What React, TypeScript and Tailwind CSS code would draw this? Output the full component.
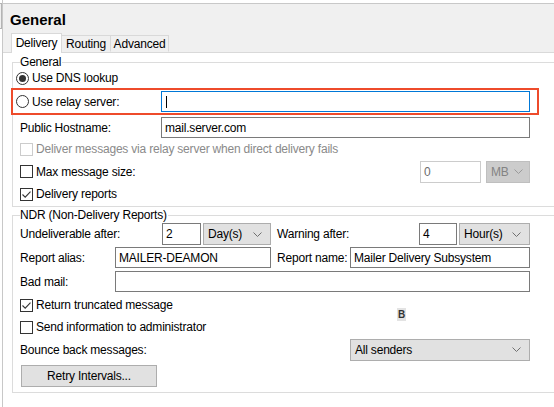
import type { ReactNode } from 'react';

function Radio({ checked }: { checked?: boolean }) {
    return (
        <span className="flex h-[13px] w-[13px] shrink-0 items-center justify-center rounded-full border border-[#333333] bg-white">
            {checked && <span className="h-[7px] w-[7px] rounded-full bg-[#333333]" />}
        </span>
    );
}

function Check({ checked, disabled }: { checked?: boolean; disabled?: boolean }) {
    return (
        <span
            className={
                'flex h-[13px] w-[13px] shrink-0 items-center justify-center border bg-white ' +
                (disabled ? 'border-[#cccccc]' : 'border-[#333333]')
            }
        >
            {checked && (
                <svg width="11" height="11" viewBox="0 0 11 11">
                    <path d="M1.5 5.5 L4.2 8.2 L9.5 2.6" fill="none" stroke="#333333" strokeWidth="1.1" />
                </svg>
            )}
        </span>
    );
}

function Chevron({ color = '#707070' }: { color?: string }) {
    return (
        <svg width="9" height="5" viewBox="0 0 9 5" className="shrink-0">
            <path d="M0.5 0.5 L4.5 4.5 L8.5 0.5" fill="none" stroke={color} strokeWidth="1" />
        </svg>
    );
}

function TextBox({ value, className = '' }: { value?: string; className?: string }) {
    return (
        <div className={'flex shrink-0 items-center border border-[#7a7a7a] bg-white pl-[3px] ' + className}>
            {value}
        </div>
    );
}

function Select({ value, className = '' }: { value: string; className?: string }) {
    return (
        <div
            className={
                'flex h-[22px] shrink-0 items-center justify-between border border-[#adadad] bg-[#e1e1e1] pl-[4px] pr-[8px] ' +
                className
            }
        >
            <span>{value}</span>
            <Chevron />
        </div>
    );
}

function Group({ label, children, className = '' }: { label: string; children: ReactNode; className?: string }) {
    return (
        <div className={'relative ml-[9px] w-[600px] border border-[#dcdcdc] ' + className}>
            <span className="absolute -top-[8px] left-[7px] bg-white pr-[1px] leading-[14px]">{label}</span>
            {children}
        </div>
    );
}

export default function App() {
    return (
        <div className="relative flex h-[407px] w-[554px] overflow-hidden bg-white font-['Liberation_Sans',Arial,sans-serif] text-[12px] tracking-[-0.2px] text-black">
            {/* left edge of neighbouring pane */}
            <div className="w-[2px] shrink-0">
                <div className="mt-[3px] h-[26px] border-y border-r border-[#b4b4b4] bg-[#f0f0f0]" />
            </div>

            <div className="flex flex-1 flex-col border-l border-[#c8c8c8] pt-[3px]">
                {/* Header */}
                <div className="flex h-[50px] flex-col border-y border-[#c8c8c8] border-b-[#d9d9d9] bg-[#f0f0f0]">
                    <div className="pl-[7px] pt-[7px] text-[15px] font-bold leading-[18px] tracking-normal">General</div>
                    <div className="relative z-10 mb-[-1px] mt-auto ml-[8px] flex items-end">
                        <div className="flex h-[20px] w-[51px] items-center justify-center border border-b-0 border-[#d9d9d9] bg-white pb-[1px]">
                            Delivery
                        </div>
                        <div className="mb-[1px] flex h-[17px] w-[49px] items-center justify-center border-y border-r border-[#d9d9d9] border-b-transparent bg-[#f0f0f0]">
                            Routing
                        </div>
                        <div className="mb-[1px] flex h-[17px] w-[58px] items-center justify-center border-y border-r border-[#d9d9d9] border-b-transparent bg-[#f0f0f0]">
                            Advanced
                        </div>
                    </div>
                </div>

                {/* General group */}
                <Group label="General" className="mt-[9px] pb-[4px] pt-[7px]">
                    <div className="flex h-[16px] items-center pl-[3px]">
                        <Radio checked />
                        <span className="ml-[3px]">Use DNS lookup</span>
                    </div>

                    <div className="-ml-[2px] mt-[2px] flex h-[27px] w-[528px] items-center border-2 border-[#ee4b2b] pl-[3px]">
                        <Radio />
                        <span className="ml-[3px] w-[129px]">Use relay server:</span>
                        <div className="flex h-[21px] w-[369px] items-center border border-[#0078d7] bg-white pl-[4px]">
                            <span className="h-[12px] w-px bg-black" />
                        </div>
                    </div>

                    <div className="mt-[2px] flex h-[21px] items-center pl-[7px]">
                        <span className="w-[141px]">Public Hostname:</span>
                        <TextBox value="mail.server.com" className="h-[21px] w-[369px]" />
                    </div>

                    <div className="mt-[3px] flex h-[16px] items-center pl-[7px] text-[#8a8a8a]">
                        <Check disabled />
                        <span className="ml-[3px]">Deliver messages via relay server when direct delivery fails</span>
                    </div>

                    <div className="mt-[3px] flex h-[23px] w-[517px] items-center pl-[7px]">
                        <Check />
                        <span className="ml-[3px]">Max message size:</span>
                        <div className="ml-auto flex h-[22px] w-[61px] items-center border border-[#cccccc] bg-white pl-[3px] text-[#6d6d6d]">
                            0
                        </div>
                        <div className="ml-[5px] flex h-[22px] w-[44px] items-center justify-between border border-[#bfbfbf] bg-[#cccccc] pl-[4px] pr-[6px] text-[#838383]">
                            <span>MB</span>
                            <Chevron color="#9a9a9a" />
                        </div>
                    </div>

                    <div className="mt-[3px] flex h-[16px] items-center pl-[7px]">
                        <Check checked />
                        <span className="ml-[3px]">Delivery reports</span>
                    </div>
                </Group>

                {/* NDR group */}
                <Group label="NDR (Non-Delivery Reports)" className="mt-[8px] pb-[5px] pt-[7px]">
                    <div className="flex h-[22px] items-center pl-[7px]">
                        <span className="w-[142px]">Undeliverable after:</span>
                        <TextBox value="2" className="h-[22px] w-[39px]" />
                        <Select value="Day(s)" className="ml-[2px] w-[68px]" />
                        <span className="ml-[6px] w-[142px]">Warning after:</span>
                        <TextBox value="4" className="h-[22px] w-[38px]" />
                        <Select value="Hour(s)" className="ml-[2px] w-[71px]" />
                    </div>

                    <div className="mt-[2px] flex h-[21px] items-center pl-[7px]">
                        <span className="w-[95px]">Report alias:</span>
                        <TextBox value="MAILER-DEAMON" className="h-[21px] w-[156px]" />
                        <span className="ml-[6px] w-[73px]">Report name:</span>
                        <TextBox value="Mailer Delivery Subsystem" className="h-[21px] w-[180px]" />
                    </div>

                    <div className="mt-[3px] flex h-[21px] items-center pl-[7px]">
                        <span className="w-[95px]">Bad mail:</span>
                        <TextBox className="h-[21px] w-[415px]" />
                    </div>

                    <div className="mt-[5px] flex h-[16px] items-center pl-[7px]">
                        <Check checked />
                        <span className="ml-[3px]">Return truncated message</span>
                    </div>

                    <div className="mt-[6px] flex h-[16px] items-center pl-[7px]">
                        <Check />
                        <span className="ml-[3px]">Send information to administrator</span>
                    </div>

                    <div className="mt-[4px] flex h-[21px] items-center pl-[7px]">
                        <span className="w-[330px]">Bounce back messages:</span>
                        <Select value="All senders" className="h-[21px] w-[180px]" />
                    </div>

                    <div className="mt-[5px] pl-[8px]">
                        <button className="flex h-[22px] w-[136px] items-center justify-center border border-[#adadad] bg-[#e1e1e1]">
                            Retry Intervals...
                        </button>
                    </div>

                    <span className="absolute left-[384px] top-[92px] flex h-[13px] w-[9px] items-center justify-center bg-[#e3e3e3] text-[10px] font-bold text-[#333333]">
                        B
                    </span>
                </Group>
            </div>
        </div>
    );
}
